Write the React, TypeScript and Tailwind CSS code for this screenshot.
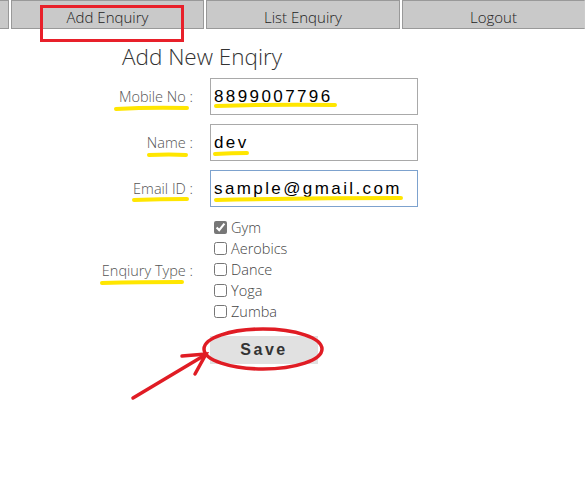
import { useState } from 'react'

const tabs = ['Add Enquiry', 'List Enquiry', 'Logout']
const types = ['Gym', 'Aerobics', 'Dance', 'Yoga', 'Zumba']

const fields = [
  { label: 'Mobile No :', value: '8899007796' },
  { label: 'Name :', value: 'dev' },
  { label: 'Email ID :', value: 'sample@gmail.com', focused: true },
]

/** Annotation marks drawn over the page (highlighter + red pen). */
function Marks() {
  return (
    <svg className="pointer-events-none absolute inset-0" width="585" height="492" aria-hidden>
      <g stroke="#ffe600" strokeWidth="4" strokeLinecap="round" fill="none">
        <path d="M116 109 Q150 107 187 108" />
        <path d="M216 106 Q280 104 335 105" />
        <path d="M149 155 Q170 154 186 155" />
        <path d="M215 154 Q232 153 247 153" />
        <path d="M134 200 Q160 199 187 199" />
        <path d="M216 200 Q310 198 401 198" />
        <path d="M102 283 Q140 282 182 282" />
      </g>
      <rect x="41.5" y="6.5" width="141" height="34" stroke="#e8202a" strokeWidth="3" fill="none" />
      <ellipse cx="263" cy="349" rx="59" ry="20" stroke="#e01c24" strokeWidth="3.5" fill="none" />
      <g stroke="#e01c24" strokeWidth="3.5" strokeLinecap="round" fill="none">
        <path d="M133 398 L205 355" />
        <path d="M182 356 L206 354 L195 374" />
      </g>
    </svg>
  )
}

export default function App() {
  const [checked, setChecked] = useState<Record<string, boolean>>({ Gym: true })

  return (
    <div className="relative h-[492px] w-[585px] overflow-hidden bg-white font-['Open_Sans',sans-serif] text-[#333]">
      <nav className="flex h-[29px] gap-[2px]">
        <div className="w-[9px] border border-l-0 border-[#999] bg-[#c9c9c9]" />
        {tabs.map((t, i) => (
          <div
            key={t}
            className={`flex items-center justify-center border border-[#999] bg-[#c9c9c9] pt-[5px] text-[15px] font-light text-[#222] ${
              i === 2 ? 'flex-1 border-r-[#ccc]' : i === 0 ? 'w-[193px]' : 'w-[194px]'
            }`}
          >
            {t}
          </div>
        ))}
      </nav>

      <h1 className="mt-[12px] pl-[122px] text-[22.5px] leading-[32px] font-light text-[#333]">Add New Enqiry</h1>

      <form className="mt-[5px] grid grid-cols-[193px_208px] gap-x-[17px]">
        {fields.map((f) => (
          <div key={f.label} className="contents">
            <label className="flex h-[46px] items-center justify-end pb-[8px] text-[14.5px] font-light text-[#555]">
              {f.label}
            </label>
            <div className="h-[46px]">
              <input
                readOnly
                value={f.value}
                className={`h-[37px] w-[208px] border bg-white px-[3px] font-['Liberation_Sans',sans-serif] text-[17px] tracking-[2.4px] text-black outline-none ${
                  f.focused ? 'border-[#7da2ce]' : 'border-[#a9a9a9]'
                }`}
              />
            </div>
          </div>
        ))}

        <label className="flex items-center justify-end pt-[4px] text-[14.5px] font-light text-[#555]">Enqiury Type :</label>
        <div className="flex flex-col pt-[1px] pl-[4px]">
          {types.map((t) => (
            <label key={t} className="flex h-[21px] items-center gap-[4px] text-[14.5px] font-light text-[#444]">
              <input
                type="checkbox"
                checked={!!checked[t]}
                onChange={() => setChecked({ ...checked, [t]: !checked[t] })}
                className="h-[13px] w-[13px] accent-[#777]"
              />
              {t}
            </label>
          ))}
        </div>

        <div />
        <div className="pt-[14px]">
          <button
            type="button"
            className="h-[28px] w-[108px] bg-[#e1e1e1] font-['Liberation_Sans',sans-serif] text-[16px] font-bold tracking-[2.5px] text-[#333]"
          >
            Save
          </button>
        </div>
      </form>

      <Marks />
    </div>
  )
}
